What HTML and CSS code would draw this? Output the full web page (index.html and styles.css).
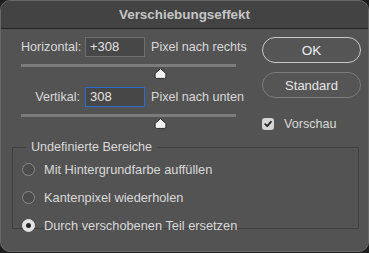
FILE: index.html
```html
<!DOCTYPE html>
<html lang="de">
<head>
<meta charset="utf-8">
<title>Verschiebungseffekt</title>
<link rel="stylesheet" href="styles.css">
</head>
<body>
<div class="window">
  <div class="titlebar">Verschiebungseffekt</div>
  <div class="main">
    <div class="left">
      <div class="field-row">
        <span class="lbl">Horizontal:</span>
        <span class="input">+308</span>
        <span class="unit">Pixel nach rechts</span>
      </div>
      <div class="slider">
        <div class="track"></div>
        <div class="thumb" style="margin-left:133px">
          <svg width="13" height="11" viewBox="0 0 13 11"><path d="M6.5 0.6 L11.9 5.4 V9 Q11.9 10.4 10.5 10.4 H2.5 Q1.1 10.4 1.1 9 V5.4 Z" fill="#f2f2f2" stroke="#2a2a2a" stroke-width="1"/></svg>
        </div>
      </div>
      <div class="field-row second">
        <span class="lbl">Vertikal:</span>
        <span class="input focus">308</span>
        <span class="unit">Pixel nach unten</span>
      </div>
      <div class="slider">
        <div class="track"></div>
        <div class="thumb" style="margin-left:133px">
          <svg width="13" height="11" viewBox="0 0 13 11"><path d="M6.5 0.6 L11.9 5.4 V9 Q11.9 10.4 10.5 10.4 H2.5 Q1.1 10.4 1.1 9 V5.4 Z" fill="#f2f2f2" stroke="#2a2a2a" stroke-width="1"/></svg>
        </div>
      </div>
    </div>
    <div class="right">
      <button class="btn primary">OK</button>
      <button class="btn">Standard</button>
      <label class="check">
        <span class="box"><svg width="12" height="12" viewBox="0 0 12 12"><path d="M3.2 6.2 L5.2 8.2 L8.9 3.8" fill="none" stroke="#262626" stroke-width="1.8" stroke-linecap="round" stroke-linejoin="round"/></svg></span>
        <span>Vorschau</span>
      </label>
    </div>
  </div>
  <fieldset class="group">
    <legend>Undefinierte Bereiche</legend>
    <div class="radio"><span class="dot"></span><span>Mit Hintergrundfarbe auffüllen</span></div>
    <div class="radio"><span class="dot"></span><span>Kantenpixel wiederholen</span></div>
    <div class="radio"><span class="dot on"></span><span>Durch verschobenen Teil ersetzen</span></div>
  </fieldset>
</div>
</body>
</html>
```
FILE: styles.css
```css
html, body {
  margin: 0;
  padding: 0;
  background: #1e1e1e;
}
body {
  font-family: "Liberation Sans", Arial, sans-serif;
  font-size: 13px;
  color: #d9d9d9;
}
.window {
  width: 367px;
  height: 250px;
  background: #535353;
  border: 1px solid #686868;
  border-radius: 10px;
  overflow: hidden;
}
.titlebar {
  height: 27px;
  line-height: 27px;
  background: #434343;
  border-bottom: 1px solid #262626;
  text-align: center;
  font-weight: bold;
  font-size: 13.4px;
  color: #c6c6c6;
}
.main {
  display: flex;
}
.left {
  width: 215px;
  flex: none;
  padding-left: 20px;
  padding-top: 8px;
}
.field-row {
  display: flex;
  align-items: center;
  height: 20px;
}
.field-row.second {
  margin-top: 8px;
}
.lbl {
  width: 59px;
  text-align: right;
  flex: none;
  font-size: 12.6px;
}
.input {
  box-sizing: border-box;
  flex: none;
  width: 60px;
  height: 20px;
  margin-left: 5px;
  padding-left: 4px;
  line-height: 18px;
  background: #474747;
  border: 1px solid #6e6e6e;
  color: #e4e4e4;
  font-size: 13px;
}
.input.focus {
  border-color: #2c6bd0;
}
.unit {
  flex: none;
  margin-left: 6px;
  font-size: 12.6px;
  white-space: nowrap;
}
.slider {
  padding-top: 7px;
}
.track {
  height: 3px;
  background: #7b7b7b;
}
.thumb {
  width: 13px;
  height: 11px;
  margin-top: 1px;
}
.thumb svg {
  display: block;
}
.right {
  margin-left: 26px;
  padding-top: 8px;
  width: 99px;
  flex: none;
  display: flex;
  flex-direction: column;
}
.btn {
  box-sizing: border-box;
  width: 99px;
  height: 26px;
  border-radius: 13px;
  background: #555555;
  border: 1px solid #7c7c7c;
  color: #e6e6e6;
  font-family: "Liberation Sans", Arial, sans-serif;
  font-size: 13px;
  padding: 0;
}
.btn.primary {
  border-color: #c9c9c9;
  color: #f0f0f0;
  font-size: 13.5px;
}
.btn + .btn {
  margin-top: 9px;
}
.check {
  display: flex;
  align-items: center;
  margin-top: 20px;
  height: 12px;
  font-size: 12.6px;
}
.box {
  flex: none;
  width: 12px;
  height: 12px;
  border-radius: 3px;
  background: #d6d6d6;
  margin-right: 10px;
}
.box svg {
  display: block;
}
.group {
  margin: 10px 0 0 11px;
  width: 347px;
  height: 89px;
  padding: 0;
  border: 1px solid #404040;
  box-sizing: border-box;
}
.group legend {
  margin-left: 13px;
  padding: 0 5px;
  line-height: 15px;
  font-size: 12.6px;
}
.radio {
  display: flex;
  align-items: center;
  height: 16px;
  margin-left: 9px;
  margin-top: 12px;
  font-size: 12.8px;
}
.radio:first-of-type {
  margin-top: 6px;
}
.dot {
  box-sizing: border-box;
  flex: none;
  width: 13px;
  height: 13px;
  border-radius: 50%;
  background: #4c4c4c;
  border: 1px solid #8a8a8a;
  margin-right: 9px;
  display: flex;
  align-items: center;
  justify-content: center;
}
.dot.on {
  background: #e2e2e2;
  border-color: #e2e2e2;
}
.dot.on::after {
  content: "";
  width: 5px;
  height: 5px;
  border-radius: 50%;
  background: #262626;
}
```
